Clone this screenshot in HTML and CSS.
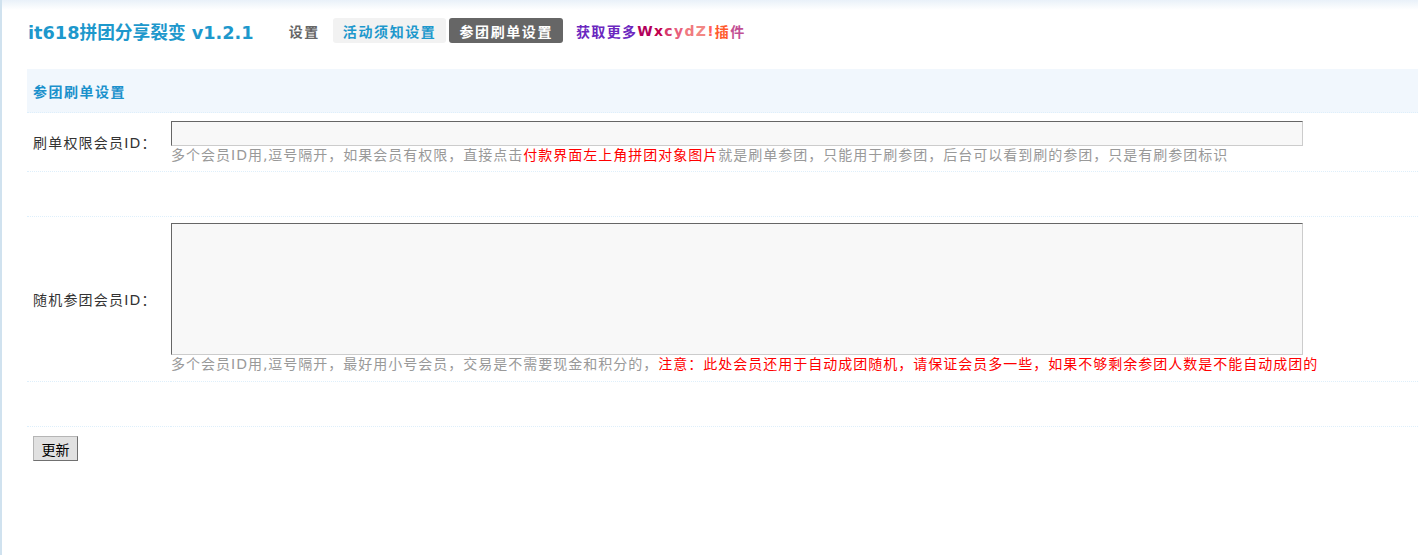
FILE: index.html
```html
<!DOCTYPE html>
<html lang="zh-CN">
<head>
<meta charset="utf-8">
<title>参团刷单设置</title>
<link rel="stylesheet" href="styles.css">
</head>
<body>
<div class="page">
  <div class="header">
    <h1 class="title">it618拼团分享裂变 v1.2.1</h1>
    <nav class="nav">
      <span class="nav-item nav-plain">设置</span>
      <a class="nav-item nav-light">活动须知设置</a>
      <a class="nav-item nav-active">参团刷单设置</a>
      <a class="nav-item nav-more"><span class="c1">获取更多</span><span class="c2">W</span><span class="c3">x</span><span class="c4">c</span><span class="c5">y</span><span class="c6">d</span><span class="c7">Z</span><span class="c8">!</span><span class="c9">插</span><span class="c10">件</span></a>
    </nav>
  </div>

  <table class="tb">
    <tr>
      <th class="section" colspan="2">参团刷单设置</th>
    </tr>
    <tr>
      <td class="label">刷单权限会员ID：</td>
      <td class="field field-1">
        <input class="txt" type="text">
        <div class="tip">多个会员ID用,逗号隔开，如果会员有权限，直接点击<span class="red">付款界面左上角拼团对象图片</span>就是刷单参团，只能用于刷参团，后台可以看到刷的参团，只是有刷参团标识</div>
      </td>
    </tr>
    <tr class="empty"><td class="label"></td><td class="field"></td></tr>
    <tr>
      <td class="label">随机参团会员ID：</td>
      <td class="field field-2">
        <textarea class="area"></textarea>
        <div class="tip">多个会员ID用,逗号隔开，最好用小号会员，交易是不需要现金和积分的，<span class="red">注意：此处会员还用于自动成团随机，请保证会员多一些，如果不够剩余参团人数是不能自动成团的</span></div>
      </td>
    </tr>
    <tr class="empty"><td class="label"></td><td class="field"></td></tr>
    <tr>
      <td class="submit" colspan="2"><button class="btn" type="button">更新</button></td>
    </tr>
  </table>
</div>
</body>
</html>
```

FILE: styles.css
```css
html, body {
  margin: 0;
  padding: 0;
  background: #fff;
}

body {
  font-family: "DejaVu Sans", "Noto Sans CJK SC", sans-serif;
  font-size: 14px;
  color: #333;
}

.page {
  min-height: 555px;
  box-sizing: border-box;
  border-left: 2px solid #d0e2ef;
  background: linear-gradient(#e9f1f9 0, #ffffff 10px) no-repeat;
  padding-top: 18px;
}

.header {
  display: flex;
  align-items: center;
  height: 25px;
  padding-left: 26px;
}

.title {
  margin: 0 25px 0 0;
  font-size: 17.7px;
  font-weight: bold;
  color: #1d98cc;
  white-space: nowrap;
}

.nav {
  display: flex;
  align-items: center;
  gap: 3px;
}

.nav-item {
  display: flex;
  align-items: center;
  height: 25px;
  padding: 0 10px;
  border-radius: 3px;
  font-family: "Noto Sans CJK SC", "DejaVu Sans", sans-serif;
  font-size: 14px;
  font-weight: bold;
  letter-spacing: 1.6px;
  white-space: nowrap;
  text-decoration: none;
}

.nav-plain {
  color: #666;
}

.nav-light {
  background: #f2f2f2;
  color: #1d98cc;
}

.nav-active {
  background: #666;
  color: #fff;
}

.nav-more {
  padding-left: 10px;
  letter-spacing: 1.3px;
}

.nav-more span { font-family: "DejaVu Sans", "Noto Sans CJK SC", sans-serif; }
.c1 { color: #6b27bf; }
.c2 { color: #b3005c; }
.c3 { color: #c2004e; }
.c4 { color: #d63a6c; }
.c5 { color: #e8607c; }
.c6 { color: #f07a80; }
.c7 { color: #f28784; }
.c8 { color: #ff6060; }
.c9 { color: #ff5a2c; }
.c10 { color: #c24f94; }

.tb {
  margin: 26px 0 0 25px;
  width: calc(100% - 25px);
  border-collapse: collapse;
  border-spacing: 0;
}

.tb td, .tb th {
  padding: 0;
  border-bottom: 1px dotted #deeffb;
  vertical-align: middle;
}

.section {
  height: 43px;
  padding-left: 6px !important;
  text-align: left;
  background: #f1f7fd;
  color: #1b91cc;
  font-family: "Noto Sans CJK SC", sans-serif;
  font-weight: bold;
  font-size: 14px;
  letter-spacing: 1.5px;
}

.label {
  width: 144px;
  box-sizing: border-box;
  padding-left: 6px !important;
  letter-spacing: 1.2px;
  color: #333;
  white-space: nowrap;
}

.field {
  text-align: left;
}

.field-1 {
  padding: 8px 0 7px !important;
}

.field-2 {
  padding: 6px 0 8px !important;
}

.empty td {
  height: 44px;
}

.txt, .area {
  display: block;
  width: 1132px;
  box-sizing: border-box;
  margin: 0;
  padding: 2px 4px;
  background: #f8f8f8;
  border: 1px solid;
  border-color: #666 #ccc #ccc #666;
  font: inherit;
  outline: none;
}

.txt {
  height: 25px;
}

.area {
  height: 132px;
  resize: none;
}

.tip {
  line-height: 18px;
  color: #999;
  letter-spacing: 1px;
  white-space: nowrap;
}

.red {
  color: #f00;
}

.submit {
  border-bottom: none !important;
  padding: 9px 0 0 6px !important;
}

.btn {
  display: block;
  width: 45px;
  height: 25px;
  padding: 0;
  margin: 0;
  background: #e1e1e1;
  border: 1px solid;
  border-color: #b5b5b5 #707070 #707070 #b5b5b5;
  font-family: "Noto Sans CJK SC", sans-serif;
  font-size: 14px;
  color: #000;
}
```
